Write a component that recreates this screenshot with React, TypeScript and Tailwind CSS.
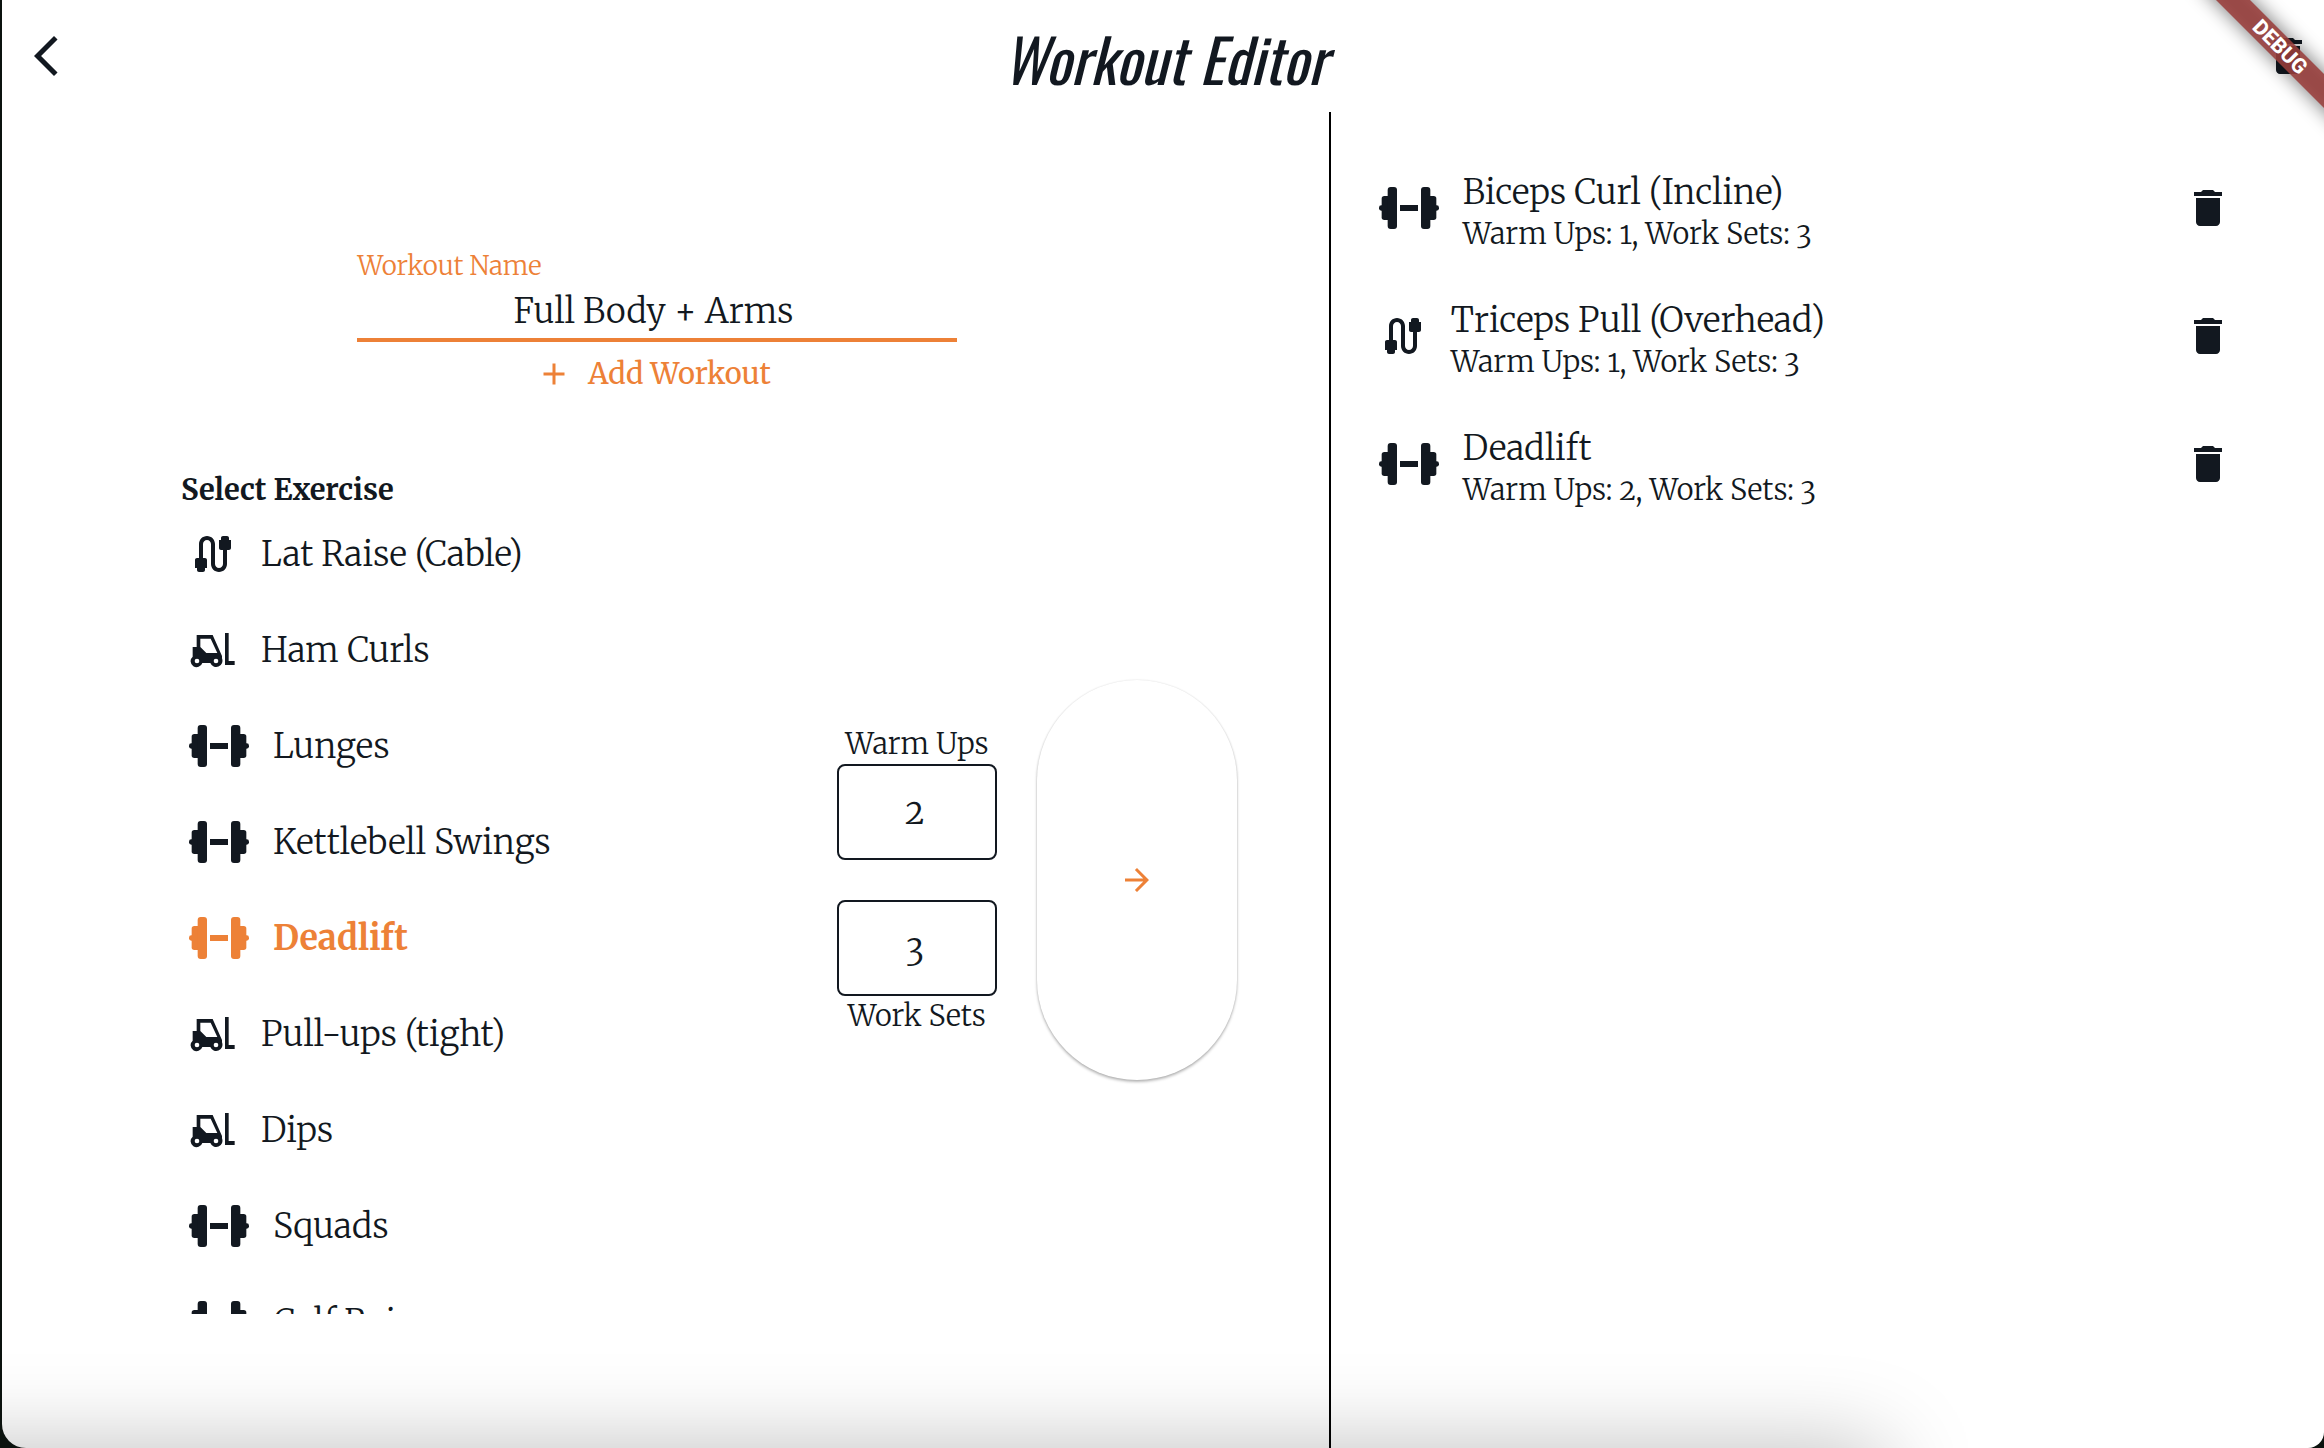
import { useState } from "react";
import type { ReactNode } from "react";
import { MdAdd, MdArrowBackIosNew, MdArrowForward, MdCable, MdDelete } from "react-icons/md";

type Equipment = "dumbbell" | "cable" | "machine";

const exercises: { name: string; equipment: Equipment }[] = [
  { name: "Lat Raise (Cable)", equipment: "cable" },
  { name: "Ham Curls", equipment: "machine" },
  { name: "Lunges", equipment: "dumbbell" },
  { name: "Kettlebell Swings", equipment: "dumbbell" },
  { name: "Deadlift", equipment: "dumbbell" },
  { name: "Pull-ups (tight)", equipment: "machine" },
  { name: "Dips", equipment: "machine" },
  { name: "Squads", equipment: "dumbbell" },
  { name: "Calf Raises", equipment: "dumbbell" },
];

const planned: { name: string; equipment: Equipment; warmUps: number; workSets: number }[] = [
  { name: "Biceps Curl (Incline)", equipment: "dumbbell", warmUps: 1, workSets: 3 },
  { name: "Triceps Pull (Overhead)", equipment: "cable", warmUps: 1, workSets: 3 },
  { name: "Deadlift", equipment: "dumbbell", warmUps: 2, workSets: 3 },
];

function DumbbellIcon() {
  return (
    <svg viewBox="0 0 180 126" className="h-[42px] w-[60px] shrink-0" fill="currentColor" aria-hidden="true">
      <rect x="0" y="55" width="20" height="16" rx="7" />
      <rect x="8" y="27" width="34" height="72" rx="8" />
      <rect x="26" y="0" width="28" height="126" rx="9" />
      <rect x="63" y="54" width="54" height="18" />
      <rect x="126" y="0" width="28" height="126" rx="9" />
      <rect x="138" y="27" width="34" height="72" rx="8" />
      <rect x="160" y="55" width="20" height="16" rx="7" />
    </svg>
  );
}

function ForkliftIcon() {
  return (
    <svg viewBox="-6 -21 144 144" className="size-12 shrink-0" fill="currentColor" aria-hidden="true">
      <path
        fillRule="evenodd"
        d="M17 6H65L93 69V76A18 18 0 1 1 58 90H34A18 18 0 1 1 5 71V42H17ZM28 17V42L46 60H79L59 17ZM18 77a7 7 0 1 0 0 14a7 7 0 1 0 0-14ZM75 77a7 7 0 1 0 0 14a7 7 0 1 0 0-14Z"
      />
      <path d="M102 0h11v84h18v12h-29z" />
    </svg>
  );
}

function EquipmentIcon({ kind }: { kind: Equipment }) {
  if (kind === "dumbbell") return <DumbbellIcon />;
  if (kind === "machine") return <ForkliftIcon />;
  return <MdCable className="size-12 shrink-0" aria-hidden="true" />;
}

function SetCount({ id, value, onChange }: { id: string; value: string; onChange: (v: string) => void }) {
  return (
    <input
      id={id}
      inputMode="numeric"
      value={value}
      onChange={(e) => onChange(e.target.value)}
      className="h-24 w-40 rounded-lg border-2 border-[#121820] bg-transparent pr-1 text-center text-[34px] outline-none"
    />
  );
}

function IconButton({ label, children }: { label: string; children: ReactNode }) {
  return (
    <button type="button" aria-label={label} className="size-12 shrink-0">
      {children}
    </button>
  );
}

export default function App() {
  const [name, setName] = useState("Full Body + Arms");
  const [selected, setSelected] = useState("Deadlift");
  const [warmUps, setWarmUps] = useState("2");
  const [workSets, setWorkSets] = useState("3");

  return (
    <div className="h-screen bg-[#0b120e] pl-[2px] font-[Merriweather,'DejaVu_Serif',serif] font-light text-[#121820] oldstyle-nums [font-optical-sizing:none]">
      <div className="relative flex h-full flex-col overflow-hidden rounded-bl-3xl rounded-br-2xl bg-white">
        <div className="pointer-events-none absolute top-full -left-48 right-[440px] h-48 shadow-[0_0_90px_rgba(0,0,0,0.26)]" />

        <header className="grid h-28 shrink-0 grid-cols-[1fr_auto_1fr] items-center pr-3 pl-5">
          <IconButton label="Back">
            <MdArrowBackIosNew className="size-12" />
          </IconButton>
          <h1 className="pt-1 pr-1 font-[Oswald,Roboto,sans-serif] text-[60px] leading-none font-normal italic">
            Workout Editor
          </h1>
          <div className="flex justify-end">
            <IconButton label="Delete workout">
              <MdDelete className="size-12" />
            </IconButton>
          </div>
        </header>

        <div className="flex min-h-0 flex-1">
          <section className="flex w-4/7 flex-col pt-[136px]">
            <div className="flex justify-center pr-4">
              <form className="flex w-[600px] flex-col" onSubmit={(e) => e.preventDefault()}>
                <label htmlFor="workout-name" className="text-[26px] leading-9 text-[#ed8137]">
                  Workout Name
                </label>
                <input
                  id="workout-name"
                  value={name}
                  onChange={(e) => setName(e.target.value)}
                  className="h-[58px] border-b-4 border-[#ed8137] bg-transparent pr-2 text-center text-[34px] outline-none"
                />
                <button
                  type="submit"
                  className="mt-2 flex h-12 items-center justify-center gap-4 pr-2 text-[29px] font-normal text-[#ed8137]"
                >
                  <MdAdd className="size-9" aria-hidden="true" />
                  Add Workout
                </button>
              </form>
            </div>

            <div className="mt-12 mb-[134px] flex min-h-0 flex-1 items-center pr-[92px] pl-[179px]">
              <div className="flex h-full min-w-0 flex-1 flex-col pt-6">
                <h2 className="h-9 shrink-0 text-[29px] leading-10 font-bold">Select Exercise</h2>
                <ul className="min-h-0 flex-1 overflow-hidden">
                  {exercises.map((ex) => (
                    <li key={ex.name}>
                      <button
                        type="button"
                        aria-pressed={ex.name === selected}
                        onClick={() => setSelected(ex.name)}
                        className={
                          ex.name === selected
                            ? "flex h-24 w-full items-center gap-6 pl-2 text-left text-[34px] font-bold text-[#ed8137]"
                            : "flex h-24 w-full items-center gap-6 pl-2 text-left text-[34px]"
                        }
                      >
                        <EquipmentIcon kind={ex.equipment} />
                        {ex.name}
                      </button>
                    </li>
                  ))}
                </ul>
              </div>

              <div className="mr-10 flex flex-col items-center">
                <label htmlFor="warm-ups" className="h-10 text-[29px] leading-10">
                  Warm Ups
                </label>
                <SetCount id="warm-ups" value={warmUps} onChange={setWarmUps} />
                <div className="h-10" />
                <SetCount id="work-sets" value={workSets} onChange={setWorkSets} />
                <label htmlFor="work-sets" className="h-10 text-[29px] leading-10">
                  Work Sets
                </label>
              </div>

              <button
                type="button"
                aria-label="Add exercise to workout"
                className="flex h-[400px] w-[200px] shrink-0 items-center justify-center rounded-full bg-white text-[#ed8137] shadow-[0_2px_3px_rgba(0,0,0,0.28),0_0_2px_rgba(0,0,0,0.12)]"
              >
                <MdArrowForward className="size-9" />
              </button>
            </div>
          </section>

          <section className="w-3/7 border-l-2 border-black pt-8 pr-[92px] pl-12">
            <ul>
              {planned.map((item) => (
                <li key={item.name} className="flex h-32 items-center gap-6">
                  <EquipmentIcon kind={item.equipment} />
                  <div className="min-w-0 flex-1 pt-2">
                    <p className="text-[34px] leading-[44px]">{item.name}</p>
                    <p className="text-[29px] leading-10">
                      Warm Ups: {item.warmUps}, Work Sets: {item.workSets}
                    </p>
                  </div>
                  <IconButton label={`Remove ${item.name}`}>
                    <MdDelete className="size-12" />
                  </IconButton>
                </li>
              ))}
            </ul>
          </section>
        </div>

        <div className="pointer-events-none absolute top-[35px] -right-14 flex h-6 w-[200px] rotate-45 items-center justify-center">
          <span className="absolute inset-0 bg-black/55 blur-[10px]" />
          <span className="absolute inset-0 bg-[#9a3f3c]/88" />
          <span className="relative font-[Roboto,sans-serif] text-[21px] leading-6 font-extrabold text-white">DEBUG</span>
        </div>
      </div>
    </div>
  );
}
